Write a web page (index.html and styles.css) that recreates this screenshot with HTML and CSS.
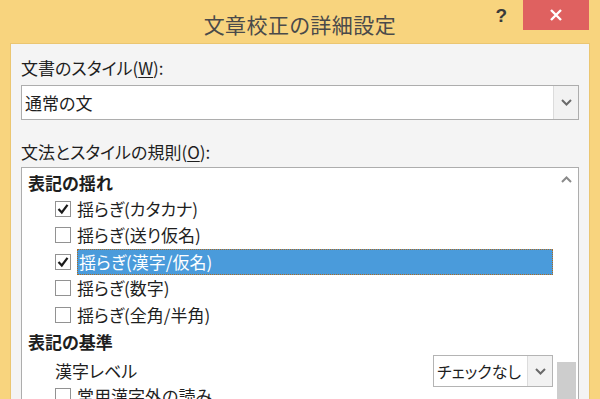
FILE: index.html
```html
<!DOCTYPE html>
<html>
<head>
<meta charset="UTF-8">
<title>文章校正の詳細設定</title>
<link rel="stylesheet" href="styles.css">
</head>
<body>
<div class="window">
	<div class="titlebar">
		<div class="titlebar-side"></div>
		<div class="titlebar-title">文章校正の詳細設定</div>
		<div class="titlebar-side titlebar-buttons">
			<span class="titlebar-help">?</span>
			<span class="titlebar-close">
				<svg width="12" height="12" viewBox="0 0 12 12"><path d="M1 1 L11 11 M11 1 L1 11" stroke="#fff" stroke-width="2.4" fill="none"/></svg>
			</span>
		</div>
	</div>
	<div class="client">
		<div class="field-label">文書のスタイル(<u>W</u>):</div>
		<div class="combo combo-wide">
			<span class="combo-text">通常の文</span>
			<span class="combo-btn">
				<svg width="11" height="7" viewBox="0 0 11 7"><path d="M1 1 L5.5 5.5 L10 1" stroke="#6a6a6a" stroke-width="2" fill="none"/></svg>
			</span>
		</div>
		<div class="field-label field-label-second">文法とスタイルの規則(<u>O</u>):</div>
		<div class="listbox">
			<div class="list-items">
				<div class="row row-group">表記の揺れ</div>
				<div class="row row-item">
					<span class="check"><svg width="14" height="14" viewBox="0 0 14 14"><path d="M2.5 7 L5.8 10.5 L11.5 2.8" stroke="#1a1a1a" stroke-width="2.2" fill="none"/></svg></span>
					<span class="item-text">揺らぎ(カタカナ)</span>
				</div>
				<div class="row row-item">
					<span class="check"></span>
					<span class="item-text">揺らぎ(送り仮名)</span>
				</div>
				<div class="row row-item">
					<span class="check"><svg width="14" height="14" viewBox="0 0 14 14"><path d="M2.5 7 L5.8 10.5 L11.5 2.8" stroke="#1a1a1a" stroke-width="2.2" fill="none"/></svg></span>
					<span class="item-text item-selected">揺らぎ(漢字/仮名)</span>
				</div>
				<div class="row row-item">
					<span class="check"></span>
					<span class="item-text">揺らぎ(数字)</span>
				</div>
				<div class="row row-item">
					<span class="check"></span>
					<span class="item-text">揺らぎ(全角/半角)</span>
				</div>
				<div class="row row-group">表記の基準</div>
				<div class="row row-item row-level">
					<span class="item-text">漢字レベル</span>
					<div class="combo combo-small">
						<span class="combo-text">チェックなし</span>
						<span class="combo-btn">
							<svg width="11" height="7" viewBox="0 0 11 7"><path d="M1 1 L5.5 5.5 L10 1" stroke="#6a6a6a" stroke-width="2" fill="none"/></svg>
						</span>
					</div>
				</div>
				<div class="row row-item">
					<span class="check"></span>
					<span class="item-text">常用漢字外の読み</span>
				</div>
			</div>
			<div class="scrollbar">
				<div class="scroll-up">
					<svg width="11" height="7" viewBox="0 0 11 7"><path d="M1 6 L5.5 1.5 L10 6" stroke="#8a8a8a" stroke-width="2" fill="none"/></svg>
				</div>
				<div class="scroll-thumb"></div>
			</div>
		</div>
	</div>
</div>
</body>
</html>
```

FILE: styles.css
```css
* {
	margin: 0;
	padding: 0;
	box-sizing: border-box;
}
body {
	width: 600px;
	height: 399px;
	overflow: hidden;
	background: #f8d47e;
	font-family: "Noto Sans CJK JP", "Noto Sans", sans-serif;
	font-feature-settings: "palt";
	color: #1e1e1e;
}
.window {
	height: 399px;
	display: flex;
	flex-direction: column;
}
.titlebar {
	height: 43px;
	display: grid;
	grid-template-columns: 1fr auto 1fr;
	flex-shrink: 0;
}
.titlebar-title {
	font-size: 21px;
	line-height: 30px;
	padding-top: 9px;
	color: #4a4a4a;
	letter-spacing: 0.5px;
}
.titlebar-buttons {
	display: flex;
	justify-content: flex-end;
	align-items: flex-start;
	padding-right: 11px;
}
.titlebar-help {
	font-family: "Liberation Sans", sans-serif;
	font-weight: bold;
	font-size: 19px;
	line-height: 32px;
	color: #3a3a3a;
	margin-right: 16px;
}
.titlebar-close {
	width: 66px;
	height: 30px;
	background: #df6160;
	display: flex;
	align-items: center;
	justify-content: center;
}
.client {
	flex: 1;
	margin: 0 10px 0 10px;
	background: #f4f4f4;
	border: 1px solid #ebc671;
	border-bottom: none;
	padding: 12px 10px 0 10px;
	overflow: hidden;
}
.field-label {
	font-size: 17px;
	line-height: 24px;
}
.field-label u {
	text-underline-offset: 2px;
}
.field-label-second {
	margin-top: 20px;
}
.combo {
	display: flex;
	background: #fff;
	border: 1px solid #adadad;
}
.combo-wide {
	margin-top: 5px;
	height: 35px;
}
.combo-text {
	flex: 1;
	font-size: 17px;
	line-height: 33px;
	padding-left: 3px;
}
.combo-btn {
	width: 25px;
	background: #f2f2f2;
	border-left: 1px solid #dcdcdc;
	display: flex;
	align-items: center;
	justify-content: center;
}
.listbox {
	margin-top: 3px;
	height: 260px;
	background: #fff;
	border: 1px solid #adadad;
	display: flex;
}
.list-items {
	flex: 1;
	padding-top: 1px;
}
.row {
	height: 26.5px;
	display: flex;
	align-items: center;
	font-size: 17px;
}
.row-group {
	font-weight: bold;
	padding-left: 6px;
}
.row-item {
	padding-left: 33px;
}
.check {
	width: 16px;
	height: 16px;
	border: 1px solid #929292;
	background: #fff;
	display: flex;
	align-items: center;
	justify-content: center;
	margin-right: 6px;
	flex-shrink: 0;
}
.item-text {
	line-height: 24px;
}
.item-selected {
	flex: 1;
	height: 26px;
	margin-right: 2px;
	padding-left: 1px;
	background: #4a9bdb;
	color: #fff;
	border: 1px dotted #b06a1e;
}
.row-level {
	height: 28px;
	padding-top: 5px;
	justify-content: space-between;
	padding-right: 2px;
}
.combo-small {
	width: 120px;
	height: 32px;
	border-color: #b4b4b4;
}
.combo-small .combo-text {
	font-size: 16px;
	line-height: 30px;
}
.scrollbar {
	width: 23px;
	display: flex;
	flex-direction: column;
	align-items: center;
}
.scroll-up {
	height: 28px;
	display: flex;
	align-items: center;
	justify-content: center;
	padding-top: 1px;
}
.scroll-thumb {
	margin-top: 172px;
	width: 19px;
	height: 80px;
	background: #cdcdcd;
}
```
